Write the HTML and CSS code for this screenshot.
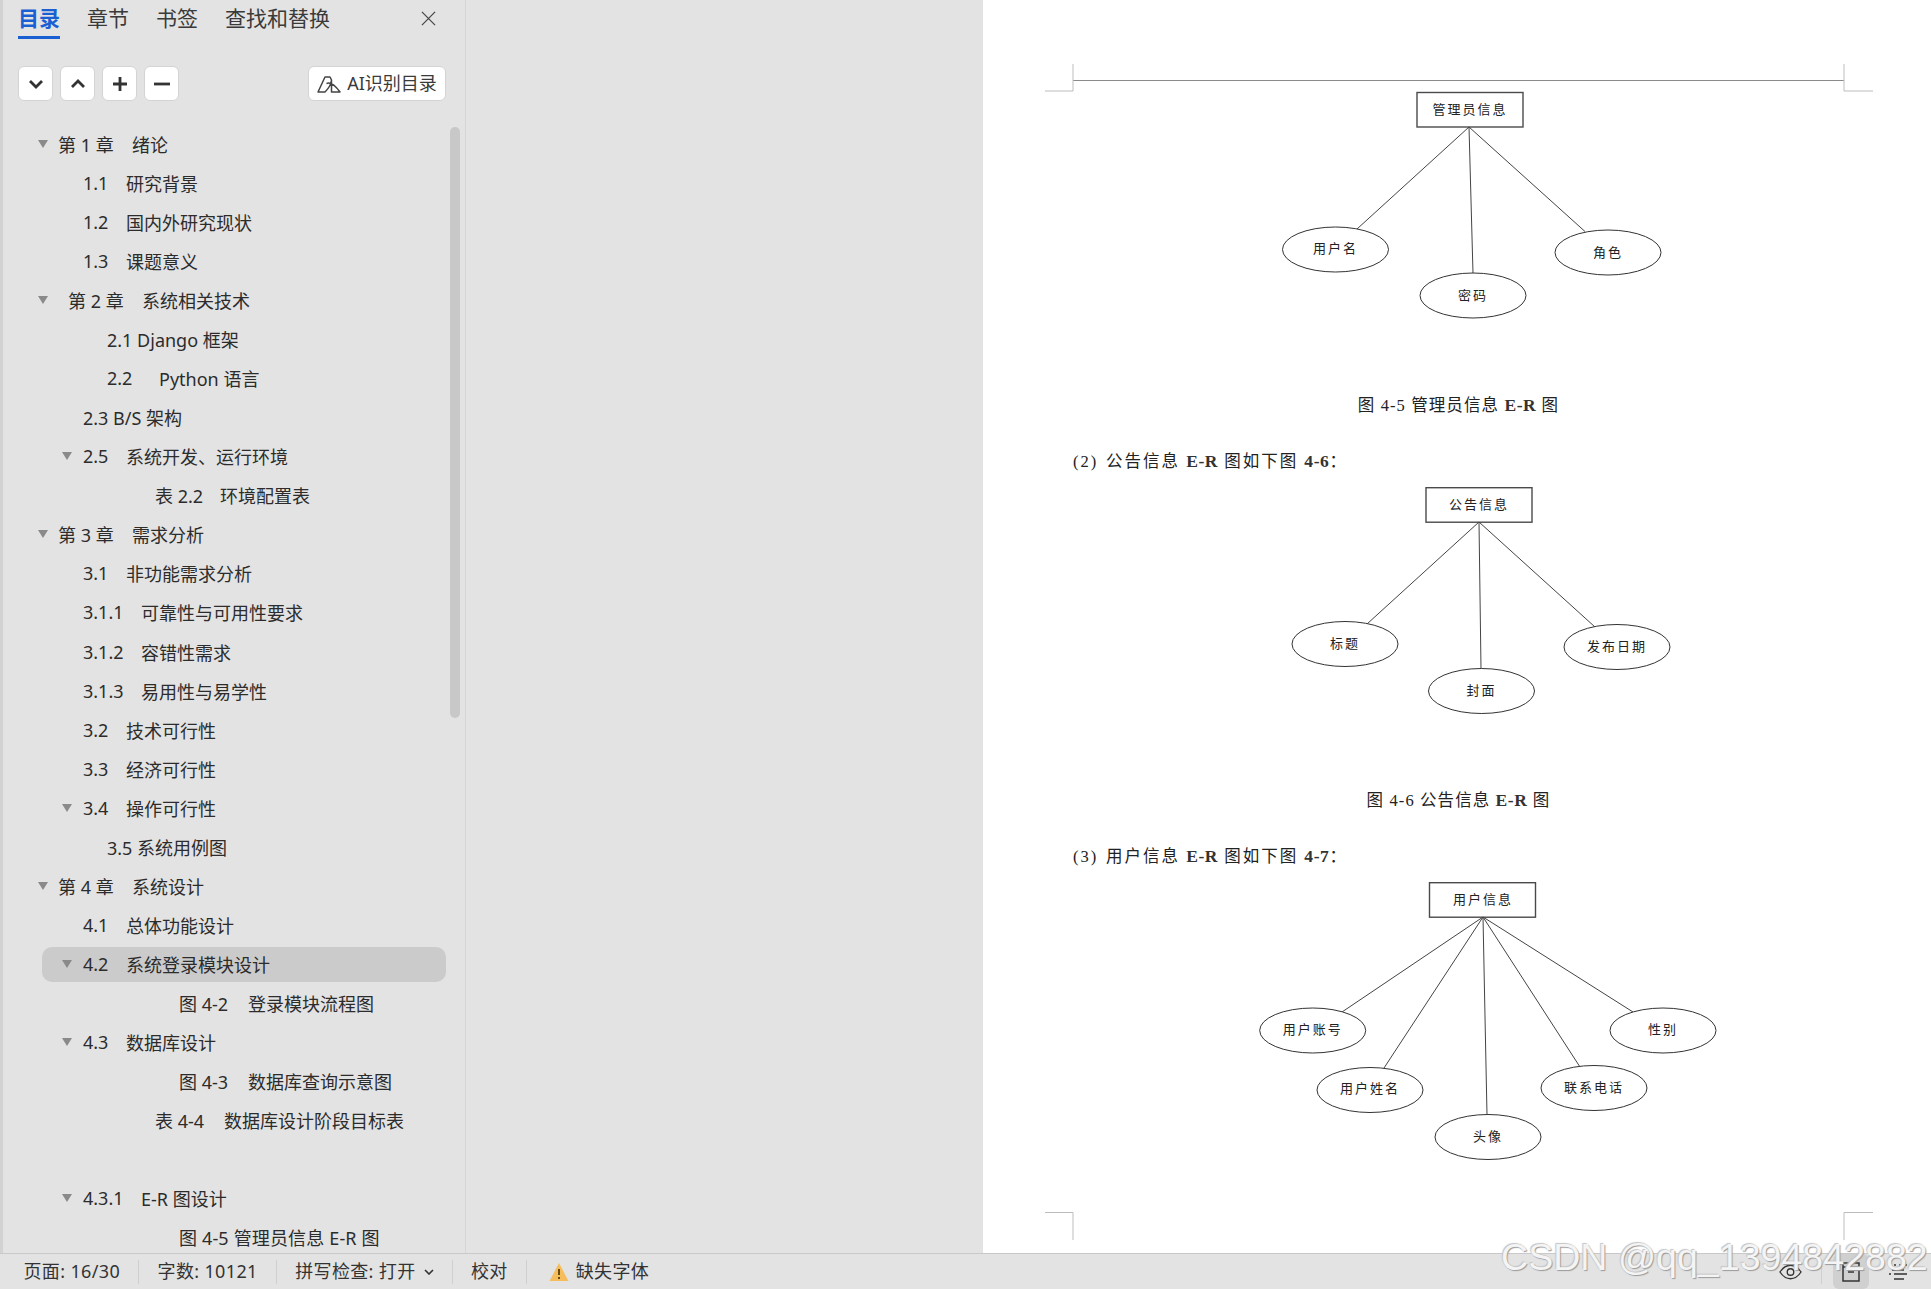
FILE: index.html
```html
<!DOCTYPE html>
<html lang="zh-CN">
<head>
<meta charset="utf-8">
<title>目录</title>
<link rel="stylesheet" href="styles.css">
</head>
<body>
<div class="app">
  <main class="main">
    <aside class="side">
      <section class="nav">
        <div class="tabs">
          <span class="tab tab-on">目录</span>
          <span class="tab">章节</span>
          <span class="tab">书签</span>
          <span class="tab">查找和替换</span>
          <svg class="close" viewBox="0 0 16 16"><path d="M1 1 15 15M15 1 1 15"/></svg>
        </div>
        <div class="tools">
          <button class="tool"><svg viewBox="0 0 16 16"><path d="M2 5 8 11 14 5"/></svg></button>
          <button class="tool"><svg viewBox="0 0 16 16"><path d="M2 11 8 5 14 11"/></svg></button>
          <button class="tool"><svg viewBox="0 0 16 16"><path d="M8 1V15M1 8H15"/></svg></button>
          <button class="tool"><svg viewBox="0 0 16 16"><path d="M0 8H16"/></svg></button>
          <button class="ai"><svg viewBox="0 0 24 18"><path d="M1 17 8 2H13L14.500 5Q14 11 8 17ZM9.500 8.500Q15 6 23 17H14.500Q14.500 11 14.500 5"/></svg><span class="ai-label">AI识别目录</span></button>
        </div>
        <div class="toc-wrap">
          <div class="toc">
            <div class="row cl1"><i class="caret"></i><span class="n n-ch">第 1 章</span>绪论</div>
            <div class="row p83"><span class="n n-sec">1.1</span>研究背景</div>
            <div class="row p83"><span class="n n-sec">1.2</span>国内外研究现状</div>
            <div class="row p83"><span class="n n-sec">1.3</span>课题意义</div>
            <div class="row cl1 wide"><i class="caret"></i><span class="n n-ch">第 2 章</span>系统相关技术</div>
            <div class="row p107">2.1 Django 框架</div>
            <div class="row p107"><span class="n n-py">2.2</span>Python 语言</div>
            <div class="row p83">2.3 B/S 架构</div>
            <div class="row cl2"><i class="caret"></i><span class="n n-sec">2.5</span>系统开发、运行环境</div>
            <div class="row p155"><span class="n n-tb">表 2.2</span>环境配置表</div>
            <div class="row cl1"><i class="caret"></i><span class="n n-ch">第 3 章</span>需求分析</div>
            <div class="row p83"><span class="n n-sec">3.1</span>非功能需求分析</div>
            <div class="row p83"><span class="n n-sub">3.1.1</span>可靠性与可用性要求</div>
            <div class="row p83"><span class="n n-sub">3.1.2</span>容错性需求</div>
            <div class="row p83"><span class="n n-sub">3.1.3</span>易用性与易学性</div>
            <div class="row p83"><span class="n n-sec">3.2</span>技术可行性</div>
            <div class="row p83"><span class="n n-sec">3.3</span>经济可行性</div>
            <div class="row cl2"><i class="caret"></i><span class="n n-sec">3.4</span>操作可行性</div>
            <div class="row p107">3.5 系统用例图</div>
            <div class="row cl1"><i class="caret"></i><span class="n n-ch">第 4 章</span>系统设计</div>
            <div class="row p83"><span class="n n-sec">4.1</span>总体功能设计</div>
            <div class="row active"><i class="caret"></i><span class="n n-sec">4.2</span>系统登录模块设计</div>
            <div class="row p179"><span class="n n-fg">图 4-2</span>登录模块流程图</div>
            <div class="row cl2"><i class="caret"></i><span class="n n-sec">4.3</span>数据库设计</div>
            <div class="row p179"><span class="n n-fg">图 4-3</span>数据库查询示意图</div>
            <div class="row p155"><span class="n n-fg">表 4-4</span>数据库设计阶段目标表</div>
            <div class="row"></div>
            <div class="row cl2"><i class="caret"></i><span class="n n-sub">4.3.1</span>E-R 图设计</div>
            <div class="row p179 last">图 4-5 管理员信息 E-R 图</div>
          </div>
          <div class="track"><div class="thumb"></div></div>
        </div>
      </section>
    </aside>

    <article class="doc">
      <svg class="marks" viewBox="983 0 948 1253">
        <path d="M1073 64V91H1045M1844 64V91H1873M1045 1212.500H1073V1240M1873 1212.500H1844V1240"/>
      </svg>
      <div class="sheet">
        <svg class="er er-1" viewBox="1073 81 771 304">
          <rect class="box" x="1417" y="92.500" width="106" height="34.500"/>
          <text x="1470" y="110">管理员信息</text>
          <path class="link" d="M1469 127 1357 229M1469 127 1473 273M1469 127 1585 231.500"/>
          <ellipse cx="1335.500" cy="249.500" rx="53" ry="22.500"/><text x="1335.500" y="249">用户名</text>
          <ellipse cx="1473" cy="295.500" rx="53" ry="22.500"/><text x="1473" y="296">密码</text>
          <ellipse cx="1608" cy="252.500" rx="53" ry="22.500"/><text x="1608" y="253">角色</text>
        </svg>
        <p class="caption">图 4-5 管理员信息 <b>E-R</b> 图</p>
        <p class="para"><span class="idx">(2)</span>公告信息 <b>E-R</b> 图如下图 <b>4-6</b>：</p>
        <svg class="er er-2" viewBox="1073 481 771 299">
          <rect class="box" x="1426" y="487.700" width="106" height="34.500"/>
          <text x="1479" y="505">公告信息</text>
          <path class="link" d="M1479 522 1367 624M1479 522 1481 669M1479 522 1595 627"/>
          <ellipse cx="1345" cy="644" rx="53" ry="22.500"/><text x="1345" y="644">标题</text>
          <ellipse cx="1481.500" cy="691" rx="53" ry="22.500"/><text x="1481.500" y="691">封面</text>
          <ellipse cx="1617" cy="647" rx="53" ry="22.500"/><text x="1617" y="647">发布日期</text>
        </svg>
        <p class="caption">图 4-6 公告信息 <b>E-R</b> 图</p>
        <p class="para"><span class="idx">(3)</span>用户信息 <b>E-R</b> 图如下图 <b>4-7</b>：</p>
        <svg class="er er-3" viewBox="1073 876 771 300">
          <rect class="box" x="1429.500" y="882.700" width="106" height="34.500"/>
          <text x="1483" y="900">用户信息</text>
          <path class="link" d="M1483 917 1342 1012M1483 917 1384 1068M1483 917 1487 1115M1483 917 1580 1067M1483 917 1633 1012"/>
          <ellipse cx="1312.700" cy="1030.500" rx="53" ry="22.500"/><text x="1312.700" y="1030">用户账号</text>
          <ellipse cx="1370" cy="1090" rx="53" ry="22.500"/><text x="1370" y="1089">用户姓名</text>
          <ellipse cx="1488" cy="1137" rx="53" ry="22.500"/><text x="1488" y="1137">头像</text>
          <ellipse cx="1594" cy="1088" rx="53" ry="22.500"/><text x="1594" y="1088">联系电话</text>
          <ellipse cx="1663" cy="1030.500" rx="53" ry="22.500"/><text x="1663" y="1030">性别</text>
        </svg>
      </div>
    </article>
  </main>

  <footer class="status">
    <span class="item">页面: 16/30</span>
    <span class="item">字数: 10121</span>
    <span class="item">拼写检查: 打开<svg class="drop" viewBox="0 0 10 6"><path d="M1 1 5 5 9 1"/></svg></span>
    <span class="item">校对</span>
    <span class="item item-warn"><svg class="warn" viewBox="0 0 20 20"><path class="warn-bg" d="M10 1 19.500 19H.5Z"/><path class="warn-mark" d="M10 7V13M10 15V17"/></svg><span>缺失字体</span></span>
    <div class="views">
      <svg class="eye" viewBox="0 0 24 16"><path d="M1 8C5 2 9 1 12 1S19 2 23 8C19 14 15 15 12 15S5 14 1 8Z"/><circle cx="12" cy="8" r="3.400"/></svg>
      <span class="vsep"></span>
      <span class="view-on"><svg viewBox="0 0 18 20"><path d="M1 1H17V19H1ZM1 5H17M6 10H12"/></svg></span>
      <svg class="outline" viewBox="0 0 20 18"><path d="M1 2H3M6 2H8M11 2H19M4 7H16M1 11H3M6 11H19M6 16H16"/></svg>
    </div>
  </footer>
  <div class="mark-text">CSDN @qq_1394842882</div>
</div>
</body>
</html>
```
FILE: styles.css
```css
* { box-sizing: border-box; }
html, body { margin: 0; height: 100%; overflow: hidden; }
body {
  font-family: "Noto Sans", "Noto Sans CJK SC", sans-serif;
  color: #2c2c2c;
  background: #fff;
}
.app { position: relative; display: flex; flex-direction: column; width: 1931px; height: 1289px; }
.main { display: flex; height: 1253px; }

/* left side */
.side {
  width: 983px;
  background: #e3e3e3;
  border-left: 3px solid #d2d2d2;
}
.nav {
  width: 463px;
  height: 100%;
  border-right: 1px solid #d6d6d6;
  display: flex;
  flex-direction: column;
  overflow: hidden;
}
.tabs { display: flex; align-items: flex-start; height: 66px; padding-left: 15px; }
.tab {
  font-size: 21px;
  line-height: 36px;
  height: 39px;
  margin-right: 27px;
  color: #3a3a3a;
}
.tab-on { color: #1b60d2; font-weight: 700; border-bottom: 3px solid #1b60d2; }
.close { width: 15px; height: 15px; margin: 11px 0 0 64px; }
.close path { fill: none; stroke: #444; stroke-width: 1.3; }

.tools { display: flex; gap: 7px; height: 35px; padding-left: 15px; }
.tool, .ai {
  background: #fff;
  border: 1px solid #d4d4d4;
  border-radius: 6px;
  height: 35px;
  padding: 0;
  display: flex;
  align-items: center;
  justify-content: center;
  font: inherit;
  color: inherit;
}
.tool { width: 35px; }
.tool svg { width: 16px; height: 16px; }
.tool path { fill: none; stroke: #333; stroke-width: 2.8; }
.ai {
  width: 138px;
  margin-left: 122px;
  font-size: 18px;
  gap: 6px;
  color: #3a3a3a;
}
.ai-label { line-height: 30px; height: 31px; }
.ai svg { width: 24px; height: 18px; }
.ai path { fill: none; stroke: #444; stroke-width: 1.5; stroke-linejoin: round; }

.toc-wrap { display: flex; flex: 1; min-height: 0; margin-top: 23.2px; }
.toc { flex: 0 0 447px; display: flex; flex-direction: column; }
.row {
  flex: none;
  display: flex;
  align-items: center;
  height: 35px;
  margin: 2.035px 0;
  font-size: 18px;
  white-space: pre;
}
.last { letter-spacing: .15px; }
.caret {
  flex: none;
  width: 0;
  height: 0;
  margin-right: 11px;
  border-left: 5px solid transparent;
  border-right: 5px solid transparent;
  border-top: 8px solid #8a8a8a;
}
.cl1 .caret { margin-right: 10px; }
.wide .caret { margin-right: 20px; }
.cl1 { padding-left: 35px; }
.cl2 { padding-left: 59px; }
.p83 { padding-left: 80px; }
.p107 { padding-left: 104px; }
.p155 { padding-left: 152px; }
.p179 { padding-left: 176px; }
.active {
  width: 404px;
  margin-left: 39px;
  padding-left: 20px;
  background: #cbcbcb;
  border-radius: 10px;
}
.n { flex: none; }
.n-ch { width: 74px; }
.n-sec { width: 43px; }
.n-sub { width: 58px; }
.n-py { width: 52px; }
.n-tb { width: 65px; }
.n-fg { width: 69px; }
.track { flex: none; width: 10px; }
.thumb { height: 591px; margin-top: 2.8px; background: #c8c8c8; border-radius: 5px; }

/* document page */
.doc { position: relative; flex: 1; padding: 80px 0 0 90px; background: #fff; overflow: hidden; }
.marks { position: absolute; left: 0; top: 0; width: 948px; height: 1253px; }
.marks path { fill: none; stroke: #bdbdbd; stroke-width: 1; }
.sheet {
  width: 771px;
  border-top: 1px solid #8a8a8a;
  font-family: "Liberation Serif", "Noto Sans CJK SC", serif;
  font-size: 16.5px;
  color: #222;
}
.er { display: block; width: 771px; overflow: visible; }
.er-1 { height: 304px; }
.er-2 { height: 299px; }
.er-3 { height: 300px; }
.er rect, .er ellipse { fill: #fff; stroke: #333; stroke-width: 1; }
.er .box { stroke: #4a4a4a; stroke-width: 1.4; }
.er .link { fill: none; stroke: #444; stroke-width: 1; }
.er text {
  font-family: "Noto Sans CJK SC", sans-serif;
  font-size: 13px;
  letter-spacing: 2px;
  text-anchor: middle;
  dominant-baseline: central;
  fill: #222;
  transform: translateY(-1.2px);
}
.caption { margin: 0; height: 40px; line-height: 41px; text-align: center; letter-spacing: 1.1px; }
.para { margin: 16px 0 0; height: 40px; line-height: 41px; letter-spacing: 2px; }
.idx { display: inline-block; width: 33px; }
.sheet b { font-weight: 700; font-size: 17.5px; letter-spacing: .6px; color: #333; }

/* status bar */
.status {
  display: flex;
  align-items: center;
  height: 36px;
  padding-left: 5px;
  background: #e3e3e3;
  border-top: 1px solid #c9c9c9;
  font-size: 18px;
  letter-spacing: .35px;
  color: #333;
}
.item {
  display: flex;
  align-items: center;
  height: 24px;
  line-height: 21px;
  padding: 0 18px 0 18.5px;
  border-right: 1px solid #cfcfcf;
  white-space: pre;
}
.item-warn { border-right: 0; padding-left: 22px; }
.drop { width: 10px; height: 6px; margin-left: 8px; }
.drop path { fill: none; stroke: #333; stroke-width: 1.6; }
.warn { width: 20px; height: 20px; margin-right: 7px; }
.warn-bg { fill: #f6bd5c; }
.warn-mark { fill: none; stroke: #6b4a10; stroke-width: 2; }
.views { display: flex; align-items: center; margin-left: auto; height: 100%; padding-right: 23px; }
.eye { width: 23px; height: 16px; margin-right: 19px; }
.eye path, .eye circle { fill: none; stroke: #333; stroke-width: 1.4; }
.vsep { width: 1px; height: 24px; background: #cfcfcf; margin-right: 11px; }
.view-on {
  display: flex;
  align-items: center;
  justify-content: center;
  width: 36px;
  height: 35px;
  background: #d0d0d0;
  border-radius: 6px;
  margin-right: 19px;
}
.view-on svg { width: 18px; height: 20px; }
.view-on path { fill: none; stroke: #333; stroke-width: 1.5; }
.outline { width: 20px; height: 18px; }
.outline path { fill: none; stroke: #333; stroke-width: 1.6; }

.mark-text {
  position: absolute;
  left: 1501px;
  top: 1235px;
  font-family: "Liberation Sans", sans-serif;
  font-size: 37.6px;
  line-height: 44px;
  white-space: nowrap;
  color: #f4f4f4;
  text-shadow: 1px 1px 1px #9a9a9a, -1px -1px 1px #c4c4c4;
}
```
